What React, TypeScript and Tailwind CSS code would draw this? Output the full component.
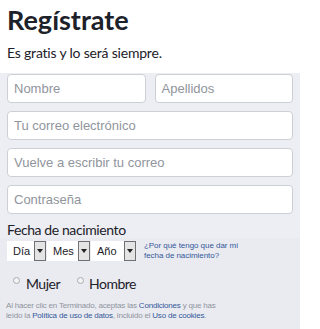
export default function App() {
  const inputCls =
    "h-[29px] w-full rounded-[4px] border border-[#ccd0d5] bg-white px-[6px] text-[13px] text-[#90949c] flex items-center"

  return (
    <main className="w-[300px] h-[329px] overflow-hidden bg-white font-['Lato','Open_Sans',sans-serif]">
      <div className="px-[7px] pt-[5px] pb-[11px]">
        <h1 className="text-[27px] leading-[30px] font-bold text-[#1d2129]">Regístrate</h1>
        <p className="mt-[9px] text-[14px] leading-[18px] tracking-[-0.2px] text-[#1d2129]">Es gratis y lo será siempre.</p>
      </div>

      <div className="bg-[#eceef3] px-[7px] pt-[1px]" style={{ fontFamily: "'Liberation Sans', Arial, sans-serif" }}>
        <div className="flex gap-[9px]">
          <div className={inputCls}>Nombre</div>
          <div className={inputCls}>Apellidos</div>
        </div>
        <div className="mt-[8px] flex flex-col gap-[8px]">
          <div className={inputCls}>Tu correo electrónico</div>
          <div className={inputCls}>Vuelve a escribir tu correo</div>
          <div className={inputCls}>Contraseña</div>
        </div>
        <div className="pt-[8px] text-[14px] leading-[16px] tracking-[-0.4px] text-[#1d2129] font-['Lato',sans-serif]">Fecha de nacimiento</div>
      </div>

      <div className="bg-[#e9ebf1] px-[7px] pt-[3px] h-[200px]" style={{ fontFamily: "'Liberation Sans', Arial, sans-serif" }}>
        <div className="flex items-center">
          <Select label="Día" w="w-[40px]" />
          <Select label="Mes" w="w-[44px]" />
          <Select label="Año" w="w-[46px]" />
          <div className="ml-[7px] text-[8px] leading-[10px] tracking-[-0.05px] text-[#365899]">
            ¿Por qué tengo que dar mi
            <br />
            fecha de nacimiento?
          </div>
        </div>

        <div className="mt-[14px] flex items-start font-['Lato',sans-serif] text-[14px] leading-[18px] tracking-[-0.5px] text-[#1d2129]">
          <span className="mt-[2px] ml-[6px] h-[7px] w-[7px] rounded-full border border-[#a8abb0] bg-[#f3f3f3]" />
          <span className="ml-[6px]">Mujer</span>
          <span className="mt-[2px] ml-[17px] h-[7px] w-[7px] rounded-full border border-[#a8abb0] bg-[#f3f3f3]" />
          <span className="ml-[5px]">Hombre</span>
        </div>

        <p className="mt-[8px] -ml-[1px] text-[8px] leading-[10px] tracking-[-0.2px] text-[#90949c]">
          Al hacer clic en Terminado, aceptas las <span className="text-[#365899]">Condiciones</span> y que has
          <br />
          leído la <span className="text-[#365899]">Política de uso de datos</span>, incluido el{" "}
          <span className="text-[#365899]">Uso de cookies</span>.
        </p>
      </div>
    </main>
  )
}

function Select({ label, w }: { label: string; w: string }) {
  return (
    <div className={`${w} h-[20px] flex bg-white border-r border-[#eceef3]`}>
      <div className="flex-1 pl-[6px] text-[11px] leading-[20px] text-[#1d2129]">{label}</div>
      <div className="w-[12px] h-[20px] border border-[#707070] bg-[#e4e4e4] flex items-center justify-center">
        <svg width="6" height="4" viewBox="0 0 6 4">
          <path d="M0 0h6L3 4z" fill="#222" />
        </svg>
      </div>
    </div>
  )
}
